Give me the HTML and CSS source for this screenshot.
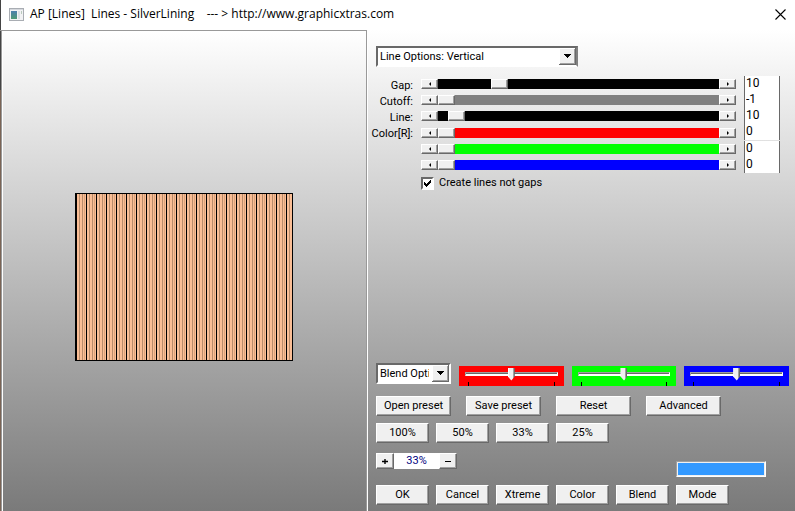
FILE: index.html
```html
<!DOCTYPE html>
<html lang="en">
<head>
<meta charset="utf-8">
<title>AP [Lines] Lines - SilverLining</title>
<link rel="stylesheet" href="styles.css">
</head>
<body>
<div class="window">
  <header class="titlebar">
    <svg class="app-icon" width="15" height="13" viewBox="0 0 15 13" aria-hidden="true">
      <defs><linearGradient id="pane" x1="0" y1="0" x2="0" y2="1"><stop offset="0" stop-color="#4d7fae"/><stop offset="1" stop-color="#4f9a74"/></linearGradient></defs>
      <rect x="0.5" y="0.5" width="14" height="12" fill="#f2f2f4" stroke="#a9adb3"/>
      <rect x="1" y="1" width="13" height="1" fill="#d5d8dd"/>
      <rect x="2" y="3" width="6" height="8" fill="url(#pane)"/>
      <rect x="9" y="3" width="2" height="8" fill="#dcdfe3"/>
      <rect x="12" y="3" width="1" height="3" fill="#b9c9bd"/>
    </svg>
    <h1 class="title">AP [Lines]&nbsp; Lines - SilverLining&nbsp;&nbsp;&nbsp; --- &gt; http://www.graphicxtras.com</h1>
    <button class="close" type="button" aria-label="Close">
      <svg width="11" height="11" viewBox="0 0 11 11"><path d="M0.5 0.5L10.5 10.5M10.5 0.5L0.5 10.5" stroke="#000" stroke-width="1.1" fill="none"/></svg>
    </button>
  </header>
  <main class="client">
    <section class="preview-pane" aria-label="Preview"><div class="preview"></div></section>
    <form class="options">
      <select class="select line-select" aria-label="Line options"><option>Line Options: Vertical</option></select>
      <div class="sliders">
        <div class="labels">
          <label for="s1">Gap:</label><label for="s2">Cutoff:</label><label for="s3">Line:</label><label for="s4">Color[R]:</label>
        </div>
        <div class="bars">
          <div class="bar black"><button type="button" class="arrow left" aria-label="Decrease gap"></button><input id="s1" type="range" min="0" max="264" value="53"><button type="button" class="arrow right" aria-label="Increase gap"></button></div>
          <div class="bar gray"><button type="button" class="arrow left" aria-label="Decrease cutoff"></button><input id="s2" type="range" min="0" max="264" value="0"><button type="button" class="arrow right" aria-label="Increase cutoff"></button></div>
          <div class="bar black"><button type="button" class="arrow left" aria-label="Decrease line"></button><input id="s3" type="range" min="0" max="264" value="10"><button type="button" class="arrow right" aria-label="Increase line"></button></div>
          <div class="bar red first-color"><button type="button" class="arrow left" aria-label="Decrease red"></button><input id="s4" type="range" min="0" max="264" value="0"><button type="button" class="arrow right" aria-label="Increase red"></button></div>
          <div class="bar green"><button type="button" class="arrow left" aria-label="Decrease green"></button><input aria-label="Green" type="range" min="0" max="264" value="0"><button type="button" class="arrow right" aria-label="Increase green"></button></div>
          <div class="bar blue"><button type="button" class="arrow left" aria-label="Decrease blue"></button><input aria-label="Blue" type="range" min="0" max="264" value="0"><button type="button" class="arrow right" aria-label="Increase blue"></button></div>
        </div>
        <div class="values">
          <input aria-label="Gap value" value="10"><input aria-label="Cutoff value" value="-1"><input aria-label="Line value" value="10"><input aria-label="Red value" value="0"><input class="split" aria-label="Green value" value="0"><input aria-label="Blue value" value="0">
        </div>
      </div>
      <label class="check"><input type="checkbox" checked>Create lines not gaps</label>

      <div class="blend">
        <select class="select blend-select" aria-label="Blend options"><option>Blend Options</option></select>
        <div class="tracks">
          <div class="track red"><input type="range" aria-label="Blend red" value="50"></div>
          <div class="track green"><input type="range" aria-label="Blend green" value="50"></div>
          <div class="track blue"><input type="range" aria-label="Blend blue" value="50"></div>
        </div>
      </div>
      <div class="row presets"><button type="button">Open preset</button><button type="button">Save preset</button><button type="button">Reset</button><button type="button">Advanced</button></div>
      <div class="row small zooms"><button type="button">100%</button><button type="button">50%</button><button type="button">33%</button><button type="button">25%</button></div>
      <div class="status">
        <div class="stepper"><button type="button" aria-label="Zoom in"><svg width="7" height="7" viewBox="0 0 7 7"><path d="M0 3.5H6M3 1V6" stroke="#000" stroke-width="1.4"/></svg></button><input aria-label="Zoom" value="33%"><button type="button" aria-label="Zoom out"><svg width="7" height="7" viewBox="0 0 7 7"><path d="M0 3.5H6" stroke="#000"/></svg></button></div>
        <button type="button" class="swatch" aria-label="Colour"></button>
      </div>
      <div class="row small actions"><button type="button">OK</button><button type="button">Cancel</button><button type="button">Xtreme</button><button type="button">Color</button><button type="button">Blend</button><button type="button">Mode</button></div>
    </form>
  </main>
</div>
</body>
</html>
```
FILE: styles.css
```css
* { box-sizing: border-box; }
body { margin: 0; font: 11px/16px Roboto, "Liberation Sans", sans-serif; color: #000; background: #fff; }
button, input, select { font: inherit; color: inherit; margin: 0; padding: 0; border-radius: 0; }
.window { min-height: 100vh; display: flex; flex-direction: column; }
.titlebar { height: 30px; flex: none; display: flex; align-items: center; padding: 0 8px 2px; border-left: 1px solid #444; background: #fff; }
.title { margin: 0 0 0 6px; flex: 1; font: 400 12px/18px "Open Sans", sans-serif; white-space: nowrap; }
.close { width: 13px; height: 13px; border: 0; background: none; display: grid; place-items: center; }
.client { flex: 1; display: grid; grid-template-columns: 367fr 428fr; background: linear-gradient(#fff, #7a7a7a); }
.preview-pane { display: grid; place-items: center; border-top: 1px solid #999; border-right: 1px solid #999; position: relative; padding: 11px 0 0 2px; }
.preview-pane::before { content: ""; position: absolute; inset: 0 auto 0 0; width: 3px; background: linear-gradient(90deg, transparent 1px, #999 1px 2px, #fff 2px), linear-gradient(#444 59px, #7a6455 59px); }
.preview { width: 218px; height: 168px; border: 1px solid #000; border-left-width: 2px;
  background: repeating-linear-gradient(90deg, #fabe96 0 2px, #b98c6b 2px 3px, #fabe96 3px 5px, #b98c6b 5px 6px, #fabe96 6px 7px, #dca47c 7px 8px, #fabe96 8px 9px, #000 9px 10px); }

.options { display: flex; flex-direction: column; align-items: flex-start; border-left: 1px solid #fff; padding: 16px 6px 6px 8px; }
.select { appearance: none; height: 21px; border: 2px solid; border-color: #696969 #fff #fff #696969; padding: 0 20px 0 2px; outline: 0;
  background: url("data:image/svg+xml,%3Csvg xmlns='http://www.w3.org/2000/svg' width='17' height='17' shape-rendering='crispEdges'%3E%3Cpath fill='%23696969' d='M0 0h17v17H0z'/%3E%3Cpath fill='%23fff' d='M0 0h16v16H0z'/%3E%3Cpath fill='%23a0a0a0' d='M1 1h15v15H1z'/%3E%3Cpath fill='%23f0f0f0' d='M1 1h14v14H1z'/%3E%3Cpath d='M5 6h7v1h-1v1h-1v1H9v1H8V9H7V8H6V7H5z'/%3E%3C/svg%3E") right center no-repeat #fff; }
.line-select { width: 202px; border-right-color: #808080; }
.sliders { align-self: stretch; display: flex; margin: 9px 9px 0 0; }
.labels { width: 37px; display: flex; flex-direction: column; align-items: flex-end; padding-top: 2px; white-space: nowrap; }
.bars { flex: 1; margin-left: 8px; padding-top: 3px; display: flex; flex-direction: column; gap: 6px; }
.bar { display: flex; height: 10px; }
.first-color { margin-top: 1px; }
.black { background: #000; }
.gray { background: #808080; }
.red { background-color: #f00; }
.green { background-color: #0f0; }
.blue { background-color: #00f; }
.arrow { width: 17px; height: 10px; border: 1px solid; border-color: #fff #696969 #696969 #fff; box-shadow: inset -1px -1px #a0a0a0; background: #f0f0f0; display: grid; place-items: center; }
.arrow::before { content: ""; border: 2px solid transparent; }
.arrow.left::before { border-left: 0; border-right-color: #000; }
.arrow.right::before { border-right: 0; border-left-color: #000; }
input[type="range"] { appearance: none; background: none; outline: 0; min-width: 0; }
.bar input { flex: 1; height: 10px; }
.bar input::-webkit-slider-thumb { appearance: none; width: 17px; height: 10px; border: 1px solid; border-color: #fff #696969 #696969 #fff; box-shadow: inset -1px -1px #a0a0a0; background: #f0f0f0; }
.values { width: 36px; margin-left: 8px; display: flex; flex-direction: column; }
.values input { width: 100%; height: 16px; padding: 0 1px 2px; line-height: 14px; font-size: 12px; border: solid #696969; border-width: 0 1px; background: #fff; outline: 0; }
.values .split { margin-top: 1px; }
.check { display: flex; align-items: center; gap: 5px; margin: 2px 0 0 45px; }
.check input { appearance: none; width: 13px; height: 13px; border: 2px solid; border-color: #696969 #fff #fff #696969;
  background: url("data:image/svg+xml,%3Csvg xmlns='http://www.w3.org/2000/svg' width='9' height='9' shape-rendering='crispEdges'%3E%3Cpath d='M1 3h1v1h1v1h1V4h1V3h1V2h1V1h1v3H7v1H6v1H5v1H4v1H3V7H2V6H1z'/%3E%3C/svg%3E") center no-repeat #fff; }

.blend { margin-top: auto; align-self: stretch; display: flex; align-items: flex-end; gap: 8px; }
.blend-select { width: 75px; margin-bottom: 2px; }
.tracks { flex: 1; display: grid; grid-template-columns: repeat(3, 1fr); gap: 8px; }
.track { height: 20px; padding: 1px 6px 0; background-image: linear-gradient(#000, #000), linear-gradient(#000, #000); background-size: 1px 4px; background-position: 9px 16px, calc(100% - 9px) 16px; background-repeat: no-repeat; }
.track input { display: block; width: 100%; height: 13px; }
.track input::-webkit-slider-runnable-track { height: 4px; border: 1px solid; border-color: #a0a0a0 #fff #fff #a0a0a0; background: linear-gradient(#696969 1px, #fff 1px); }
.track input::-webkit-slider-thumb { appearance: none; width: 7px; height: 13px; margin-top: -5px; background: linear-gradient(90deg, #fff 1px, #f0f0f0 1px 5px, #a0a0a0 5px 6px, #696969 6px); clip-path: polygon(0 0, 100% 0, 100% 9px, 50% 100%, 0 9px); }
.row { display: flex; flex-wrap: wrap; gap: 15px; }
.row button, .stepper button { border: 1px solid; border-color: #fff #696969 #696969 #fff; box-shadow: inset -1px -1px #a0a0a0; background: #f0f0f0; }
.row button { width: 75px; height: 20px; line-height: 16px; }
.row.small { gap: 7px; }
.small button { width: 53px; }
.presets { margin-top: 10px; }
.zooms { margin-top: 7px; }
.status { align-self: stretch; display: flex; justify-content: space-between; align-items: flex-start; margin: 10px 23px 0 0; }
.stepper { display: flex; height: 16px; }
.stepper button { width: 18px; display: grid; place-items: center; }
.stepper input { width: 45px; text-align: center; color: #000080; border: 0; background: #fff; }
.swatch { width: 90px; height: 16px; margin-top: 8px; border: 1px solid; border-color: #a0a0a0 #fff #fff #a0a0a0; padding: 0; background: #39f; box-shadow: inset 0 0 0 1px #f0f0f0; }
.actions { margin-top: 8px; }
```
